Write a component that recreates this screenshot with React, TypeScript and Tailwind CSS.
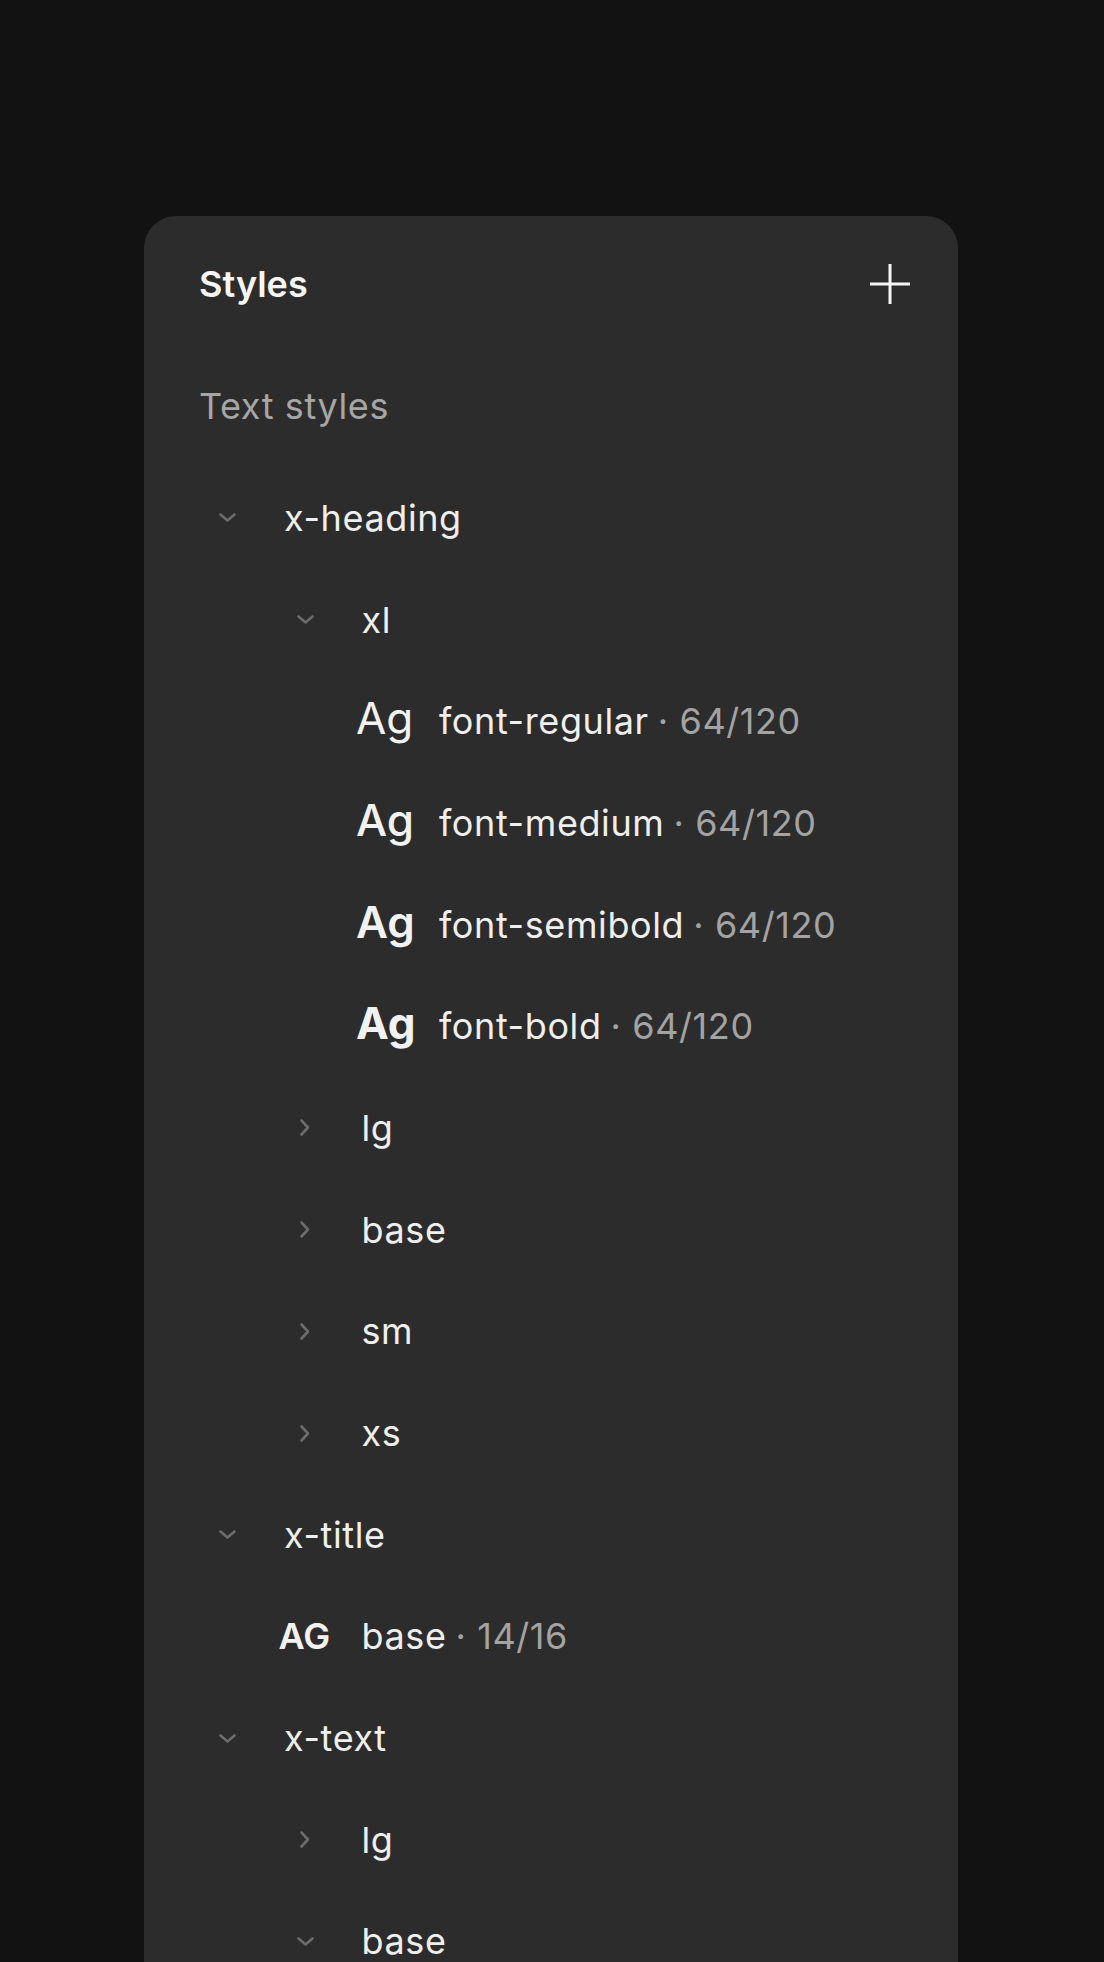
import type { ReactNode } from "react";

type Row =
  | { kind: "group"; level: number; label: string; open: boolean }
  | { kind: "style"; level: number; sample: string; sampleClass: string; name: string; meta: string };

const rows: Row[] = [
  { kind: "group", level: 0, label: "x-heading", open: true },
  { kind: "group", level: 1, label: "xl", open: true },
  { kind: "style", level: 2, sample: "Ag", sampleClass: "text-[44px] font-normal", name: "font-regular", meta: "64/120" },
  { kind: "style", level: 2, sample: "Ag", sampleClass: "text-[44px] font-medium", name: "font-medium", meta: "64/120" },
  { kind: "style", level: 2, sample: "Ag", sampleClass: "text-[44px] font-semibold", name: "font-semibold", meta: "64/120" },
  { kind: "style", level: 2, sample: "Ag", sampleClass: "text-[44px] font-bold", name: "font-bold", meta: "64/120" },
  { kind: "group", level: 1, label: "lg", open: false },
  { kind: "group", level: 1, label: "base", open: false },
  { kind: "group", level: 1, label: "sm", open: false },
  { kind: "group", level: 1, label: "xs", open: false },
  { kind: "group", level: 0, label: "x-title", open: true },
  { kind: "style", level: 1, sample: "AG", sampleClass: "text-[36px] font-semibold", name: "base", meta: "14/16" },
  { kind: "group", level: 0, label: "x-text", open: true },
  { kind: "group", level: 1, label: "lg", open: false },
  { kind: "group", level: 1, label: "base", open: true },
];

const indents = ["pl-0", "pl-[77.5px]", "pl-[155px]"];

function Chevron({ open }: { open: boolean }) {
  return open ? (
    <svg width="17" height="9" viewBox="0 0 17 9" fill="none" className="text-[#6c6c6c]">
      <path d="M1.5 1.5 L8.5 7.5 L15.5 1.5" stroke="currentColor" strokeWidth="2.6" strokeLinecap="round" strokeLinejoin="round" />
    </svg>
  ) : (
    <svg width="12" height="17" viewBox="0 0 12 17" fill="none" className="text-[#6c6c6c]">
      <path d="M2.5 1.5 L9 8.5 L2.5 15.5" stroke="currentColor" strokeWidth="2.6" strokeLinecap="round" strokeLinejoin="round" />
    </svg>
  );
}

function TreeRow({ row }: { row: Row }) {
  let body: ReactNode;
  if (row.kind === "group") {
    body = (
      <>
        <span className="flex w-[57px] shrink-0 justify-center">
          <Chevron open={row.open} />
        </span>
        <span className="ml-[28px] text-[#efefef]">{row.label}</span>
      </>
    );
  } else {
    body = (
      <span className="flex items-baseline">
        <span className={`w-[85px] shrink-0 pl-[2px] leading-none tracking-normal text-[#f2f2f2] ${row.sampleClass}`}>{row.sample}</span>
        <span className="text-[#efefef]">{row.name}</span>
        <span className="ml-[9px] text-[#a3a3a3]">· {row.meta}</span>
      </span>
    );
  }
  return <div className={`flex h-[101.7px] items-center ${indents[row.level]}`}>{body}</div>;
}

export default function App() {
  return (
    <div className="h-[1962px] w-full overflow-hidden bg-[#121212] [font-family:Inter,'Noto_Sans',sans-serif]">
      <div className="ml-[144px] mt-[216px] w-[814px] rounded-[32px] bg-[#2c2c2c] pb-20 pl-[55px] pr-[48px] pt-[48px]">
        <div className="flex h-[40px] items-center justify-between">
          <span className="text-[36px] font-semibold text-[#f5f5f5]">Styles</span>
          <svg width="40" height="40" viewBox="0 0 40 40" className="text-[#f5f5f5]">
            <path d="M0 20 H40 M20 0 V40" stroke="currentColor" strokeWidth="3" />
          </svg>
        </div>
        <div className="mt-[72px] flex h-[60px] items-center text-[36px] tracking-[0.6px] text-[#a6a6a6]">Text styles</div>
        <div className="mt-[31px] text-[36px] tracking-[0.6px]">
          {rows.map((r, i) => (
            <TreeRow key={i} row={r} />
          ))}
        </div>
      </div>
    </div>
  );
}
